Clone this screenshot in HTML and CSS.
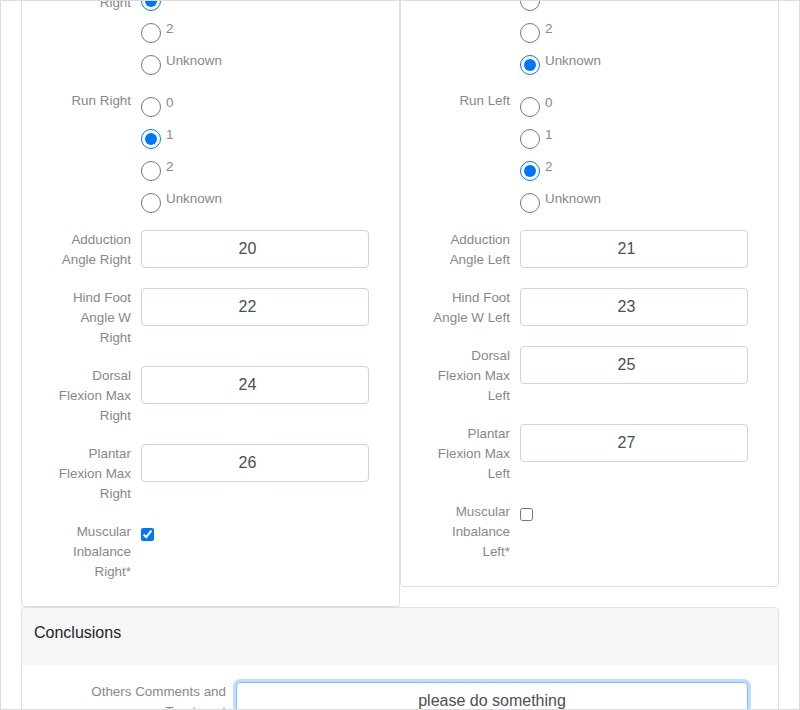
FILE: index.html
```html
<!DOCTYPE html>
<html>
<head>
<meta charset="utf-8">
<link rel="stylesheet" href="styles.css">
</head>
<body>
<div class="frame">
  <div class="inner">
    <div class="cards">
      <div class="card">
        <div class="row group first">
          <div class="lbl">Tiptoe Walking Right</div>
          <div class="opts">
            <label class="opt"><input type="radio" name="twr"><span>0</span></label>
            <label class="opt"><input type="radio" name="twr" checked><span>1</span></label>
            <label class="opt"><input type="radio" name="twr"><span>2</span></label>
            <label class="opt"><input type="radio" name="twr"><span>Unknown</span></label>
          </div>
        </div>
        <div class="row group second">
          <div class="lbl">Run Right</div>
          <div class="opts">
            <label class="opt"><input type="radio" name="rr"><span>0</span></label>
            <label class="opt"><input type="radio" name="rr" checked><span>1</span></label>
            <label class="opt"><input type="radio" name="rr"><span>2</span></label>
            <label class="opt"><input type="radio" name="rr"><span>Unknown</span></label>
          </div>
        </div>
        <div class="row field">
          <div class="lbl">Adduction Angle Right</div>
          <input class="num" type="text" value="20">
        </div>
        <div class="row field">
          <div class="lbl">Hind Foot Angle W Right</div>
          <input class="num" type="text" value="22">
        </div>
        <div class="row field">
          <div class="lbl">Dorsal Flexion Max Right</div>
          <input class="num" type="text" value="24">
        </div>
        <div class="row field">
          <div class="lbl">Plantar Flexion Max Right</div>
          <input class="num" type="text" value="26">
        </div>
        <div class="row field">
          <div class="lbl">Muscular Inbalance Right*</div>
          <input class="chk" type="checkbox" checked>
        </div>
      </div>
      <div class="card">
        <div class="row group first">
          <div class="lbl">Tiptoe Walking Left</div>
          <div class="opts">
            <label class="opt"><input type="radio" name="twl"><span>0</span></label>
            <label class="opt"><input type="radio" name="twl"><span>1</span></label>
            <label class="opt"><input type="radio" name="twl"><span>2</span></label>
            <label class="opt"><input type="radio" name="twl" checked><span>Unknown</span></label>
          </div>
        </div>
        <div class="row group second">
          <div class="lbl">Run Left</div>
          <div class="opts">
            <label class="opt"><input type="radio" name="rl"><span>0</span></label>
            <label class="opt"><input type="radio" name="rl"><span>1</span></label>
            <label class="opt"><input type="radio" name="rl" checked><span>2</span></label>
            <label class="opt"><input type="radio" name="rl"><span>Unknown</span></label>
          </div>
        </div>
        <div class="row field">
          <div class="lbl">Adduction Angle Left</div>
          <input class="num" type="text" value="21">
        </div>
        <div class="row field">
          <div class="lbl">Hind Foot Angle W Left</div>
          <input class="num" type="text" value="23">
        </div>
        <div class="row field">
          <div class="lbl">Dorsal Flexion Max Left</div>
          <input class="num" type="text" value="25">
        </div>
        <div class="row field">
          <div class="lbl">Plantar Flexion Max Left</div>
          <input class="num" type="text" value="27">
        </div>
        <div class="row field">
          <div class="lbl">Muscular Inbalance Left*</div>
          <input class="chk" type="checkbox">
        </div>
      </div>
    </div>
    <div class="card wide">
      <div class="card-header">Conclusions</div>
      <div class="card-body">
        <div class="row">
          <div class="lbl lbl-wide">Others Comments and Treatment</div>
          <textarea class="comments">please do something</textarea>
        </div>
      </div>
    </div>
  </div>
</div>
</body>
</html>
```
FILE: styles.css
```css
html, body {
  margin: 0;
  padding: 0;
  background: #fff;
}
body {
  font-family: "Liberation Sans", Arial, sans-serif;
  font-size: 13.4px;
  line-height: 20px;
  color: #212529;
}
.frame {
  width: 800px;
  height: 710px;
  box-sizing: border-box;
  border: 1px solid #dcdcdc;
  padding: 0 20px;
  overflow: hidden;
}
.inner {
  margin-top: -69px;
}
.cards {
  display: flex;
  align-items: flex-start;
}
.card {
  width: 379px;
  box-sizing: border-box;
  border: 1px solid #dfdfdf;
  border-radius: 4px;
  padding: 20px 0 6px;
  background: #fff;
}
.row {
  display: flex;
  align-items: flex-start;
}
.lbl {
  width: 109px;
  box-sizing: border-box;
  padding-left: 29px;
  margin-right: 10px;
  text-align: right;
  color: #888;
  line-height: 20px;
  flex: none;
}
.group.first {
  margin-bottom: 10px;
}
.group.second {
  margin-bottom: 11px;
}
.field {
  margin-bottom: 18px;
}
.opts {
  display: flex;
  flex-direction: column;
}
.opt {
  display: flex;
  align-items: flex-start;
  height: 32px;
  color: #888;
}
.opt input {
  width: 20px;
  height: 20px;
  margin: 6px 5px 6px 0;
}
.opt span {
  padding-top: 2px;
  line-height: 20px;
}
.num {
  width: 228px;
  height: 38px;
  box-sizing: border-box;
  border: 1px solid #ced4da;
  border-radius: 4px;
  padding: 6px 27px 6px 12px;
  font-family: "Liberation Sans", Arial, sans-serif;
  font-size: 16px;
  line-height: 24px;
  color: #495057;
  text-align: center;
  margin: 0;
  background: #fff;
}
.chk {
  width: 13px;
  height: 13px;
  margin: 6px 0 0 0;
}
.wide {
  width: 758px;
  padding: 0;
  overflow: hidden;
}
.card-header {
  background: #f6f6f6;
  height: 57px;
  box-sizing: border-box;
  padding: 15px 12px 0;
  font-size: 16px;
  line-height: 20px;
  color: #212529;
}
.card-body {
  padding: 17px 0 20px;
}
.lbl-wide {
  width: 204px;
  padding-left: 40px;
}
.comments {
  width: 512px;
  height: 100px;
  box-sizing: border-box;
  border: 1px solid #80bdff;
  border-radius: 4px;
  box-shadow: 0 0 0 3px rgba(0, 123, 255, 0.25);
  padding: 6px 12px;
  font-family: "Liberation Sans", Arial, sans-serif;
  font-size: 16px;
  line-height: 24px;
  color: #495057;
  text-align: center;
  resize: none;
  margin: 0;
  outline: none;
}
```
